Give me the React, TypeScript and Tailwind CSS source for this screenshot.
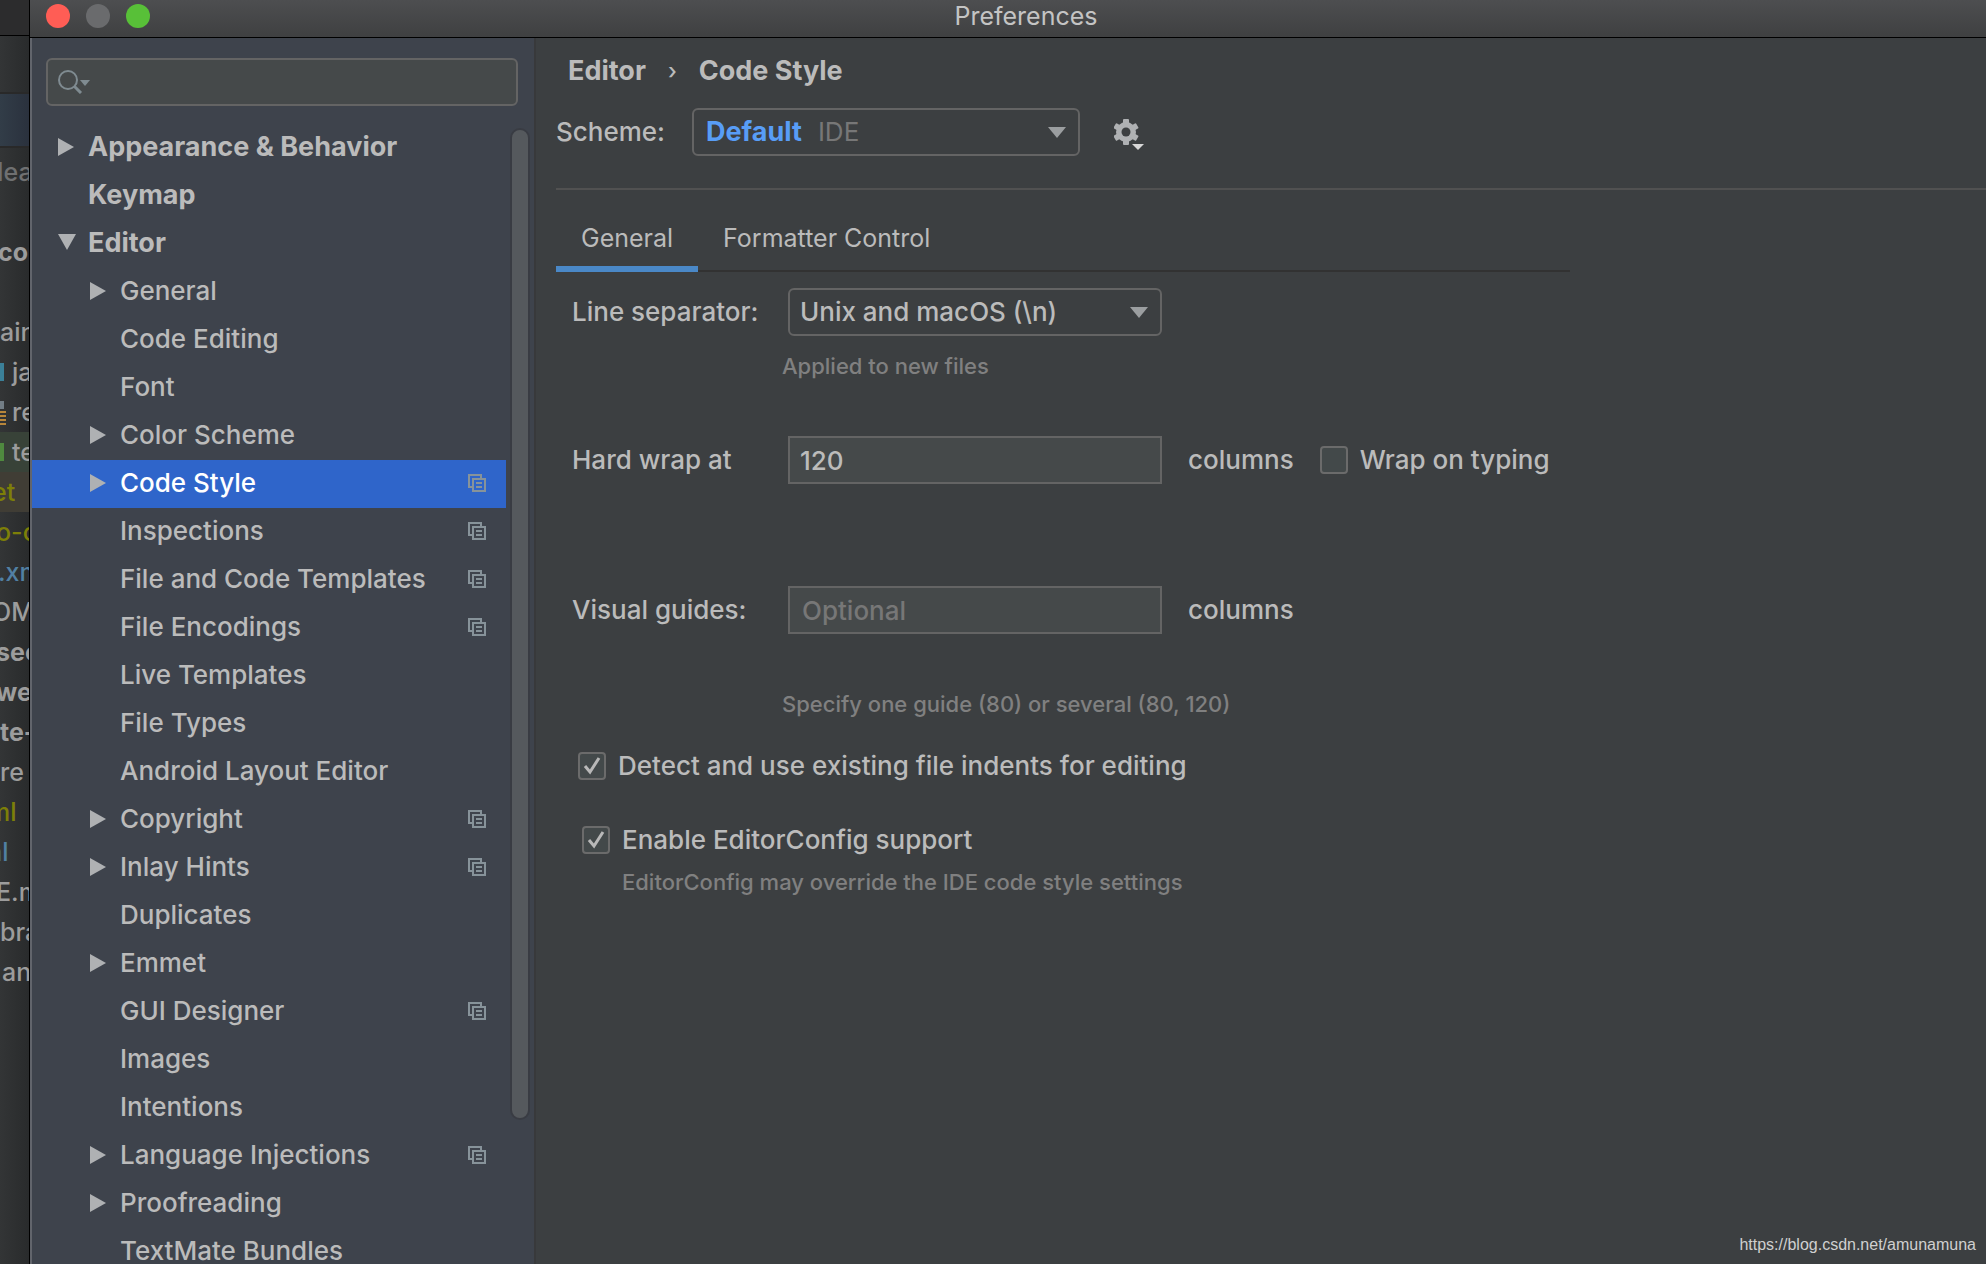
import { useState } from "react";

type Item = {
  label: string;
  level: 0 | 1;
  arrow?: "right" | "down";
  project?: boolean;
};

const ITEMS: Item[] = [
  { label: "Appearance & Behavior", level: 0, arrow: "right" },
  { label: "Keymap", level: 0 },
  { label: "Editor", level: 0, arrow: "down" },
  { label: "General", level: 1, arrow: "right" },
  { label: "Code Editing", level: 1 },
  { label: "Font", level: 1 },
  { label: "Color Scheme", level: 1, arrow: "right" },
  { label: "Code Style", level: 1, arrow: "right", project: true },
  { label: "Inspections", level: 1, project: true },
  { label: "File and Code Templates", level: 1, project: true },
  { label: "File Encodings", level: 1, project: true },
  { label: "Live Templates", level: 1 },
  { label: "File Types", level: 1 },
  { label: "Android Layout Editor", level: 1 },
  { label: "Copyright", level: 1, arrow: "right", project: true },
  { label: "Inlay Hints", level: 1, arrow: "right", project: true },
  { label: "Duplicates", level: 1 },
  { label: "Emmet", level: 1, arrow: "right" },
  { label: "GUI Designer", level: 1, project: true },
  { label: "Images", level: 1 },
  { label: "Intentions", level: 1 },
  { label: "Language Injections", level: 1, arrow: "right", project: true },
  { label: "Proofreading", level: 1, arrow: "right" },
  { label: "TextMate Bundles", level: 1 },
];

// the slice of the project window that stays visible on the left
const BEHIND = [
  { text: "dea", style: "-indent-3 text-[#6f7071]" },
  { text: "", style: "" },
  { text: "con", style: "-indent-0.5 font-bold text-[#9c9c9c]" },
  { text: "", style: "" },
  { text: "ain", style: "text-[#9c9c9c]" },
  { text: "ja", style: "text-[#9c9c9c]", icon: "java" },
  { text: "re", style: "text-[#9c9c9c]", icon: "resources" },
  { text: "te", style: "bg-[#384238] text-[#9c9c9c]", icon: "test" },
  { text: "et", style: "-indent-2 bg-[#403d35] text-[#7d7f08]" },
  { text: "o-c", style: "-indent-1 text-[#7d7f08]" },
  { text: ".xm", style: "-indent-0.5 text-[#5180a3]" },
  { text: "OM", style: "-indent-2 text-[#9c9c9c]" },
  { text: "sec", style: "-indent-1 font-bold text-[#9c9c9c]" },
  { text: "we", style: "-indent-1 font-bold text-[#9c9c9c]" },
  { text: "te-", style: "font-bold text-[#9c9c9c]" },
  { text: "re", style: "text-[#9c9c9c]" },
  { text: "ml", style: "-indent-3 text-[#7d7f08]" },
  { text: "ml", style: "-indent-5 text-[#5180a3]" },
  { text: "E.m", style: "-indent-1 text-[#9c9c9c]" },
  { text: "bra", style: "text-[#9c9c9c]" },
  { text: "an", style: "indent-0.5 text-[#9c9c9c]" },
];

function FolderIcon({ kind }: { kind: string }) {
  return (
    <svg viewBox="0 0 6 26" className="h-[26px] w-1.5 shrink-0" aria-hidden="true">
      {kind === "java" && <path d="M0 4H4V22H0Z" className="fill-[#3b8098]" />}
      {kind === "test" && <path d="M0 4H4V22H0Z" className="fill-[#4f8a3f]" />}
      {kind === "resources" && (
        <>
          <path d="M0 2H4V10H0Z" className="fill-[#737e86]" />
          <path d="M0 13H6M0 17H6M0 21H6M0 25H6" className="stroke-[#b8863a] stroke-2" />
        </>
      )}
    </svg>
  );
}

function Arrow({ dir }: { dir?: "right" | "down" }) {
  return (
    <svg viewBox="0 0 18 18" className="h-[18px] w-[18px] shrink-0 fill-[#afb1b3]" aria-hidden="true">
      {dir === "right" && <path d="M0 0 16 9 0 18Z" />}
      {dir === "down" && <path d="M0 0H18L9 16Z" />}
    </svg>
  );
}

function ProjectIcon() {
  return (
    <svg viewBox="0 0 18 18" className="h-[18px] w-[18px] fill-none stroke-[#87939a] stroke-2" aria-hidden="true">
      <path d="M4 13H1V1H13V4" />
      <path d="M5 5H17V17H5Z" />
      <path d="M8 9H14M8 13H14" />
    </svg>
  );
}

function GearIcon() {
  return (
    <svg viewBox="0 0 32 36" className="h-9 w-8" aria-hidden="true">
      <g className="fill-[#afb1b3]">
        <circle cx="12" cy="18" r="10" />
        <rect x="9" y="5" width="6" height="26" rx="1" />
        <rect x="9" y="5" width="6" height="26" rx="1" transform="rotate(60 12 18)" />
        <rect x="9" y="5" width="6" height="26" rx="1" transform="rotate(120 12 18)" />
      </g>
      <circle cx="12" cy="18" r="4.500" className="fill-[#3c3f41]" />
      <path d="M18 30H30L24 36Z" className="fill-[#d8d8d8]" />
    </svg>
  );
}

function DropArrow() {
  return (
    <svg viewBox="0 0 18 12" className="pointer-events-none col-start-1 row-start-1 mr-3.5 h-3 w-[18px] justify-self-end fill-[#9b9ea0]" aria-hidden="true">
      <path d="M0 1H18L9 12Z" />
    </svg>
  );
}

function CheckBox({ id, label, initial }: { id: string; label: string; initial: boolean }) {
  const [checked, setChecked] = useState(initial);

  return (
    <div className="flex items-center gap-3">
      <span className="grid place-items-center">
        <input
          id={id}
          type="checkbox"
          checked={checked}
          onChange={(e) => setChecked(e.target.checked)}
          className="col-start-1 row-start-1 h-7 w-7 appearance-none rounded-sm border-2 border-[#6b6b6b] bg-[#43494a]"
        />
        {checked && (
          <svg viewBox="0 0 18 18" className="pointer-events-none col-start-1 row-start-1 h-[18px] w-[18px] fill-none stroke-[#b8b8b8] stroke-3" aria-hidden="true">
            <path d="M2 9 7 15 16 1" />
          </svg>
        )}
      </span>
      <label htmlFor={id}>{label}</label>
    </div>
  );
}

export default function App() {
  const [selected, setSelected] = useState("Code Style");
  const [tab, setTab] = useState("General");
  const [query, setQuery] = useState("");
  const [wrapAt, setWrapAt] = useState("120");
  const [guides, setGuides] = useState("");

  return (
    <div className="flex h-screen overflow-hidden bg-[#3c3f41] font-[Inter,sans-serif] text-[26px] leading-8 font-medium text-[#bbbbbb]">
      <div className="w-[29px] shrink-0 overflow-hidden bg-linear-to-r from-[#333536] to-[#292b2c] text-[25px] whitespace-nowrap" aria-hidden="true">
        <div className="h-9 border-b border-black bg-[#2c2c2d]" />
        <div className="h-[58px] border-b-2 border-[#292929]" />
        <div className="h-[54px] border-b-2 border-[#292929] bg-linear-to-r from-[#323d48] to-[#2a313d]" />
        <div className="pt-1">
          {BEHIND.map((row, i) => (
            <div key={i} className={`flex h-10 items-center gap-1.5 ${row.style}`}>
              {row.icon && <FolderIcon kind={row.icon} />}
              <span className="block">{row.text}</span>
            </div>
          ))}
        </div>
      </div>

      <div className="flex min-w-0 flex-1 flex-col border-l border-black">
        <header className="grid h-[38px] shrink-0 grid-cols-[1fr_auto_1fr] items-center border-b border-black bg-linear-to-b from-[#4d4e50] to-[#3f4041] pb-[5px]">
          <div className="flex gap-4 pl-4">
            <button aria-label="Close" className="h-6 w-6 rounded-full bg-[#ff5d55]" />
            <button aria-label="Minimize" className="h-6 w-6 rounded-full bg-[#6a6b6d]" />
            <button aria-label="Zoom" className="h-6 w-6 rounded-full bg-[#58c038]" />
          </div>
          <h1 className="pl-9 text-[25px] font-normal text-[#c4c4c4]">Preferences</h1>
        </header>

        <div className="flex min-h-0 flex-1">
          <aside className="flex w-[506px] shrink-0 flex-col border-r-2 border-l-2 border-r-[#38393b] border-l-[#62656c] bg-[#3e434c]">
            <label className="mt-5 mr-4 ml-3.5 flex h-12 shrink-0 items-center rounded-md border-2 border-[#646464] bg-[#45494a] px-2.5">
              <svg viewBox="0 0 32 24" className="h-6 w-8 shrink-0" aria-hidden="true">
                <circle cx="10" cy="10" r="9" className="fill-none stroke-[#7f8b91] stroke-2" />
                <path d="M16 16 23 23" className="stroke-[#7f8b91] stroke-3" />
                <path d="M22 10H32L27 16Z" className="fill-[#7f8b91]" />
              </svg>
              <input
                type="search"
                aria-label="Search settings"
                value={query}
                onChange={(e) => setQuery(e.target.value)}
                className="min-w-0 flex-1 bg-transparent outline-none"
              />
            </label>

            <div className="mt-[18px] flex min-h-0 flex-1">
              <nav className="min-w-0 flex-1 overflow-hidden">
                {ITEMS.map((item) => (
                  <button
                    key={item.label}
                    onClick={() => setSelected(item.label)}
                    className={`flex h-12 w-full items-center gap-3 pr-5 pb-0.5 text-left whitespace-nowrap ${
                      item.level === 0 ? "pl-[26px] text-[27px] font-bold" : "pl-[58px]"
                    } ${selected === item.label ? "bg-[#2f65ca] text-white" : ""}`}
                  >
                    <Arrow dir={item.arrow} />
                    <span className="flex-1">{item.label}</span>
                    {item.project && <ProjectIcon />}
                  </button>
                ))}
              </nav>
              <div className="mt-1 mr-1 ml-1 h-[87%] w-5 rounded-full border-2 border-[#393c43] bg-[#55595d]" />
            </div>
          </aside>

          <main className="flex min-w-0 flex-1 flex-col pl-5">
            <nav aria-label="Breadcrumb" className="mt-[17px] flex items-center gap-[22px] pl-3 text-[27px] font-bold">
              <a href="#editor">Editor</a>
              <span className="text-[22px] font-medium">›</span>
              <a href="#code-style">Code Style</a>
            </nav>

            <div className="mt-[21px] flex items-center">
              <label htmlFor="scheme" className="w-[136px]">Scheme:</label>
              <div className="grid items-center">
                <select id="scheme" className="col-start-1 row-start-1 h-12 w-[388px] appearance-none rounded-md border-2 border-[#646464] bg-transparent text-transparent">
                  <option>Default IDE</option>
                </select>
                <span className="pointer-events-none col-start-1 row-start-1 flex gap-4 pl-3.5 font-normal text-[#777777]">
                  <b className="text-[27px] text-[#589df6]">Default</b>IDE
                </span>
                <DropArrow />
              </div>
              <button aria-label="Scheme actions" className="ml-[34px]">
                <GearIcon />
              </button>
            </div>

            <hr className="mt-8 border-t-2 border-[#515151]" />

            <div role="tablist" className="mt-6 flex h-[58px] w-[1014px] max-w-full border-b-2 border-[#323232] text-[25px]">
              {["General", "Formatter Control"].map((name) => (
                <button
                  key={name}
                  role="tab"
                  aria-selected={tab === name}
                  onClick={() => setTab(name)}
                  className={`-mb-0.5 h-[58px] border-b-6 px-[25px] pb-1 font-normal ${
                    tab === name ? "border-[#4a88c7]" : "border-transparent"
                  }`}
                >
                  {name}
                </button>
              ))}
            </div>

            <div className="mt-4 flex items-center pl-4">
              <label htmlFor="separator" className="w-[216px]">Line separator:</label>
              <div className="grid items-center">
                <select id="separator" className="col-start-1 row-start-1 h-12 w-[374px] appearance-none rounded-md border-2 border-[#646464] bg-transparent pl-2.5">
                  <option>Unix and macOS (\n)</option>
                  <option>Windows (\r\n)</option>
                </select>
                <DropArrow />
              </div>
            </div>
            <p className="mt-[14px] pl-[226px] text-[22px] text-[#808080]">Applied to new files</p>

            <div className="mt-[54px] flex items-center pl-4">
              <label htmlFor="wrap" className="w-[216px]">Hard wrap at</label>
              <input
                id="wrap"
                value={wrapAt}
                onChange={(e) => setWrapAt(e.target.value)}
                className="h-12 w-[374px] border-2 border-[#646464] bg-[#45494a] px-2.5"
              />
              <span className="mr-[26px] ml-[26px]">columns</span>
              <CheckBox id="typing" label="Wrap on typing" initial={false} />
            </div>

            <div className="mt-[102px] flex items-center pl-4">
              <label htmlFor="guides" className="w-[216px]">Visual guides:</label>
              <input
                id="guides"
                value={guides}
                placeholder="Optional"
                onChange={(e) => setGuides(e.target.value)}
                className="h-12 w-[374px] border-2 border-[#646464] bg-[#45494a] px-3 placeholder:text-[#777777]"
              />
              <span className="ml-[26px]">columns</span>
            </div>
            <p className="mt-[54px] pl-[226px] text-[22px] text-[#808080]">Specify one guide (80) or several (80, 120)</p>

            <div className="mt-[30px] pl-[22px]">
              <CheckBox id="indents" label="Detect and use existing file indents for editing" initial />
            </div>
            <div className="mt-[42px] pl-[26px]">
              <CheckBox id="editorconfig" label="Enable EditorConfig support" initial />
              <p className="mt-[10px] pl-10 text-[22px] text-[#808080]">EditorConfig may override the IDE code style settings</p>
            </div>

            <footer className="mt-auto pr-2.5 pb-1 text-right font-['Liberation_Sans',sans-serif] text-base leading-[30px] font-normal text-[#d0d0d0]">
              https://blog.csdn.net/amunamuna
            </footer>
          </main>
        </div>
      </div>
    </div>
  );
}
